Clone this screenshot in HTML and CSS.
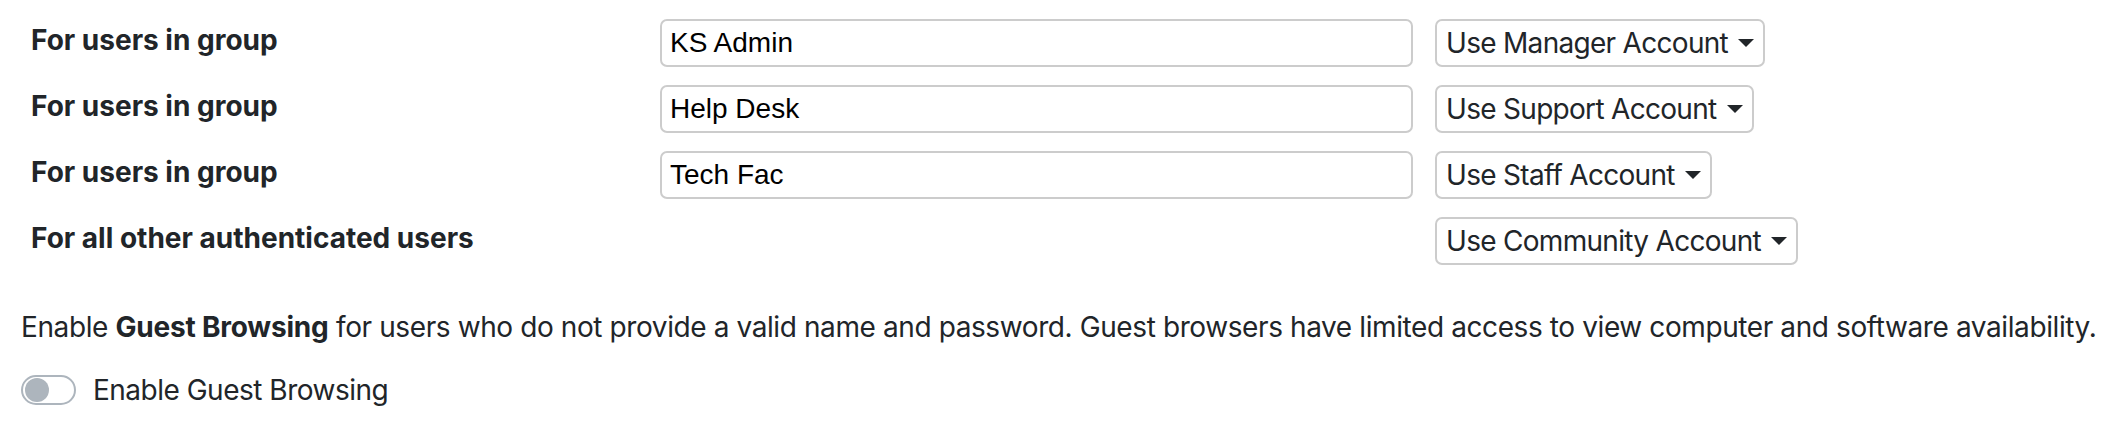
FILE: index.html
```html
<!DOCTYPE html>
<html lang="en">
<head>
    <meta charset="UTF-8">
    <title>Account Mapping</title>
    <link rel="stylesheet" href="styles.css">
</head>
<body>
    <div class="page">
        <!-- Group to account mapping -->
        <div class="mapping">
            <label class="map-label">For users in group</label>
            <input type="text" class="group-input" value="KS Admin">
            <div class="account-btn">Use Manager Account<span class="caret"></span></div>

            <label class="map-label">For users in group</label>
            <input type="text" class="group-input" value="Help Desk">
            <div class="account-btn">Use Support Account<span class="caret"></span></div>

            <label class="map-label">For users in group</label>
            <input type="text" class="group-input" value="Tech Fac">
            <div class="account-btn">Use Staff Account<span class="caret"></span></div>

            <label class="map-label">For all other authenticated users</label>
            <div></div>
            <div class="account-btn">Use Community Account<span class="caret"></span></div>
        </div>

        <p class="guest-note">Enable <strong>Guest Browsing</strong> for users who do not provide a valid name and password. Guest browsers have limited access to view computer and software availability.</p>

        <div class="switch-row">
            <span class="switch"><span class="knob"></span></span>
            <span class="switch-label">Enable Guest Browsing</span>
        </div>
    </div>
</body>
</html>
```

FILE: styles.css
```css
body {
    margin: 0;
    background-color: #fff;
    color: #212529;
    font-family: Inter, "Noto Sans", sans-serif;
    font-size: 28px;
    line-height: 42px;
    letter-spacing: -0.4px;
}
.page {
    padding: 19px 0 0 21px;
}

/* Mapping grid */
.mapping {
    display: grid;
    grid-template-columns: 607px 753px auto;
    column-gap: 22px;
    row-gap: 18px;
    padding-left: 10px;
    align-items: start;
}
.map-label {
    font-weight: bold;
    letter-spacing: 0;
}
.group-input {
    box-sizing: border-box;
    width: 100%;
    height: 48px;
    margin: 0;
    padding: 0 8px;
    border: 2px solid #cccccc;
    border-radius: 7px;
    font-family: "Liberation Sans", Arial, sans-serif;
    font-size: 28px;
    letter-spacing: 0;
    color: #000;
    background-color: #fff;
    outline: none;
}
.account-btn {
    justify-self: start;
    box-sizing: border-box;
    height: 48px;
    display: flex;
    align-items: center;
    padding: 0 9px 0 9px;
    border: 2px solid #cccccc;
    border-radius: 7px;
    color: #212529;
    letter-spacing: -0.7px;
}
.caret {
    width: 0;
    height: 0;
    margin-left: 10px;
    border-left: 8px solid transparent;
    border-right: 8px solid transparent;
    border-top: 8px solid #212529;
}

/* Guest browsing */
.guest-note {
    margin: 41px 0 0 0;
    white-space: nowrap;
}
.guest-note strong {
    letter-spacing: -0.2px;
}
.switch-row {
    display: flex;
    align-items: center;
    gap: 17px;
    margin-top: 21px;
}
.switch-label {
    letter-spacing: -0.5px;
}
.switch {
    box-sizing: border-box;
    width: 55px;
    height: 30px;
    border: 2px solid #adb5bd;
    border-radius: 15px;
    display: flex;
    align-items: center;
    padding-left: 2px;
}
.knob {
    width: 24px;
    height: 24px;
    border-radius: 50%;
    background-color: #adb5bd;
}
```
